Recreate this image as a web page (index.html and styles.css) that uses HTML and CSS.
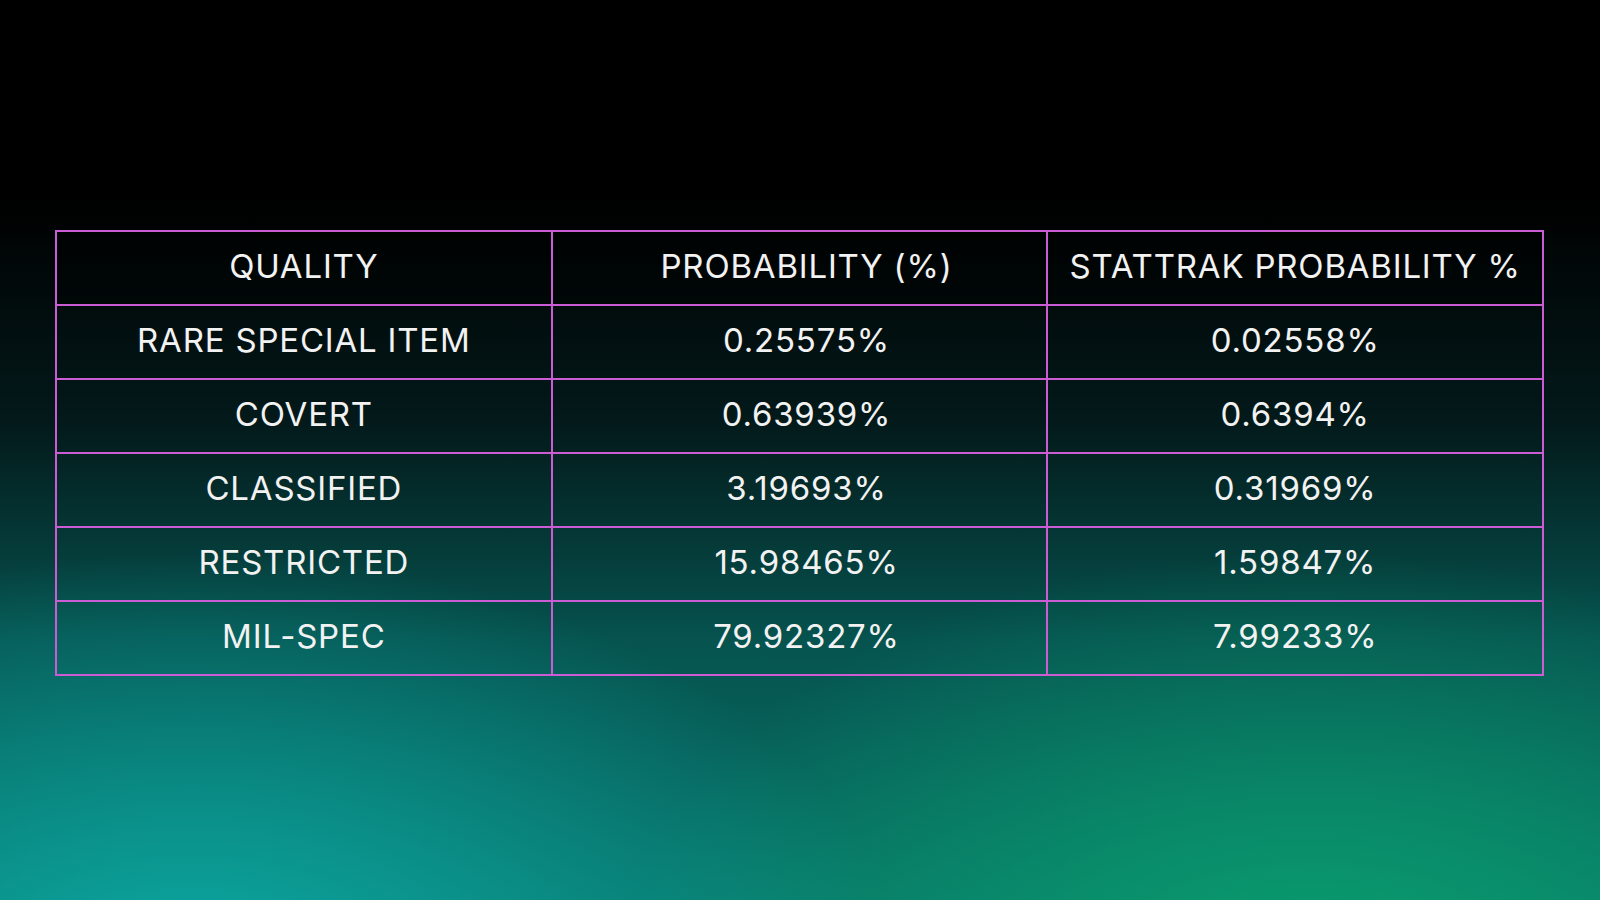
FILE: index.html
```html
<!DOCTYPE html>
<html lang="en">
<head>
<meta charset="utf-8">
<title>Case odds</title>
<link rel="stylesheet" href="styles.css">
</head>
<body>
<main class="page">
  <table class="odds">
    <thead>
      <tr><th>QUALITY</th><th>PROBABILITY (%)</th><th>STATTRAK PROBABILITY %</th></tr>
    </thead>
    <tbody>
      <tr><td>RARE SPECIAL ITEM</td><td>0.25575%</td><td>0.02558%</td></tr>
      <tr><td>COVERT</td><td>0.63939%</td><td>0.6394%</td></tr>
      <tr><td>CLASSIFIED</td><td>3.19693%</td><td>0.31969%</td></tr>
      <tr><td>RESTRICTED</td><td>15.98465%</td><td>1.59847%</td></tr>
      <tr><td>MIL-SPEC</td><td>79.92327%</td><td>7.99233%</td></tr>
    </tbody>
  </table>
</main>
</body>
</html>
```

FILE: styles.css
```css
html, body {
  margin: 0;
  padding: 0;
  height: 100%;
}
body {
  background-color: #000;
  background-image:
    radial-gradient(ellipse 700px 420px at 12% 108%, rgba(12,170,165,0.95), rgba(12,170,165,0) 100%),
    radial-gradient(ellipse 700px 420px at 82% 108%, rgba(10,160,110,0.95), rgba(10,160,110,0) 100%),
    linear-gradient(180deg, #000 0px, #000 200px, #03191a 420px, #06534f 640px, #087368 900px);
  font-family: Inter, "Noto Sans", sans-serif;
  color: #f2f2f2;
  overflow: hidden;
}
.page {
  box-sizing: border-box;
  height: 900px;
  padding: 230px 0 0 55px;
}
.odds {
  border-collapse: collapse;
  width: 1489px;
  table-layout: fixed;
}
.odds th, .odds td {
  border: 2px solid #cc5cd4;
  height: 69px;
  padding: 0 0 3px;
  text-align: center;
  vertical-align: middle;
  font-size: 33px;
  font-weight: 400;
  letter-spacing: 0.8px;
  line-height: 1;
}
.odds th:nth-child(2), .odds td:nth-child(2) {
  padding-left: 14px;
}
.odds th {
  background: rgba(0,0,0,0.35);
}
```
